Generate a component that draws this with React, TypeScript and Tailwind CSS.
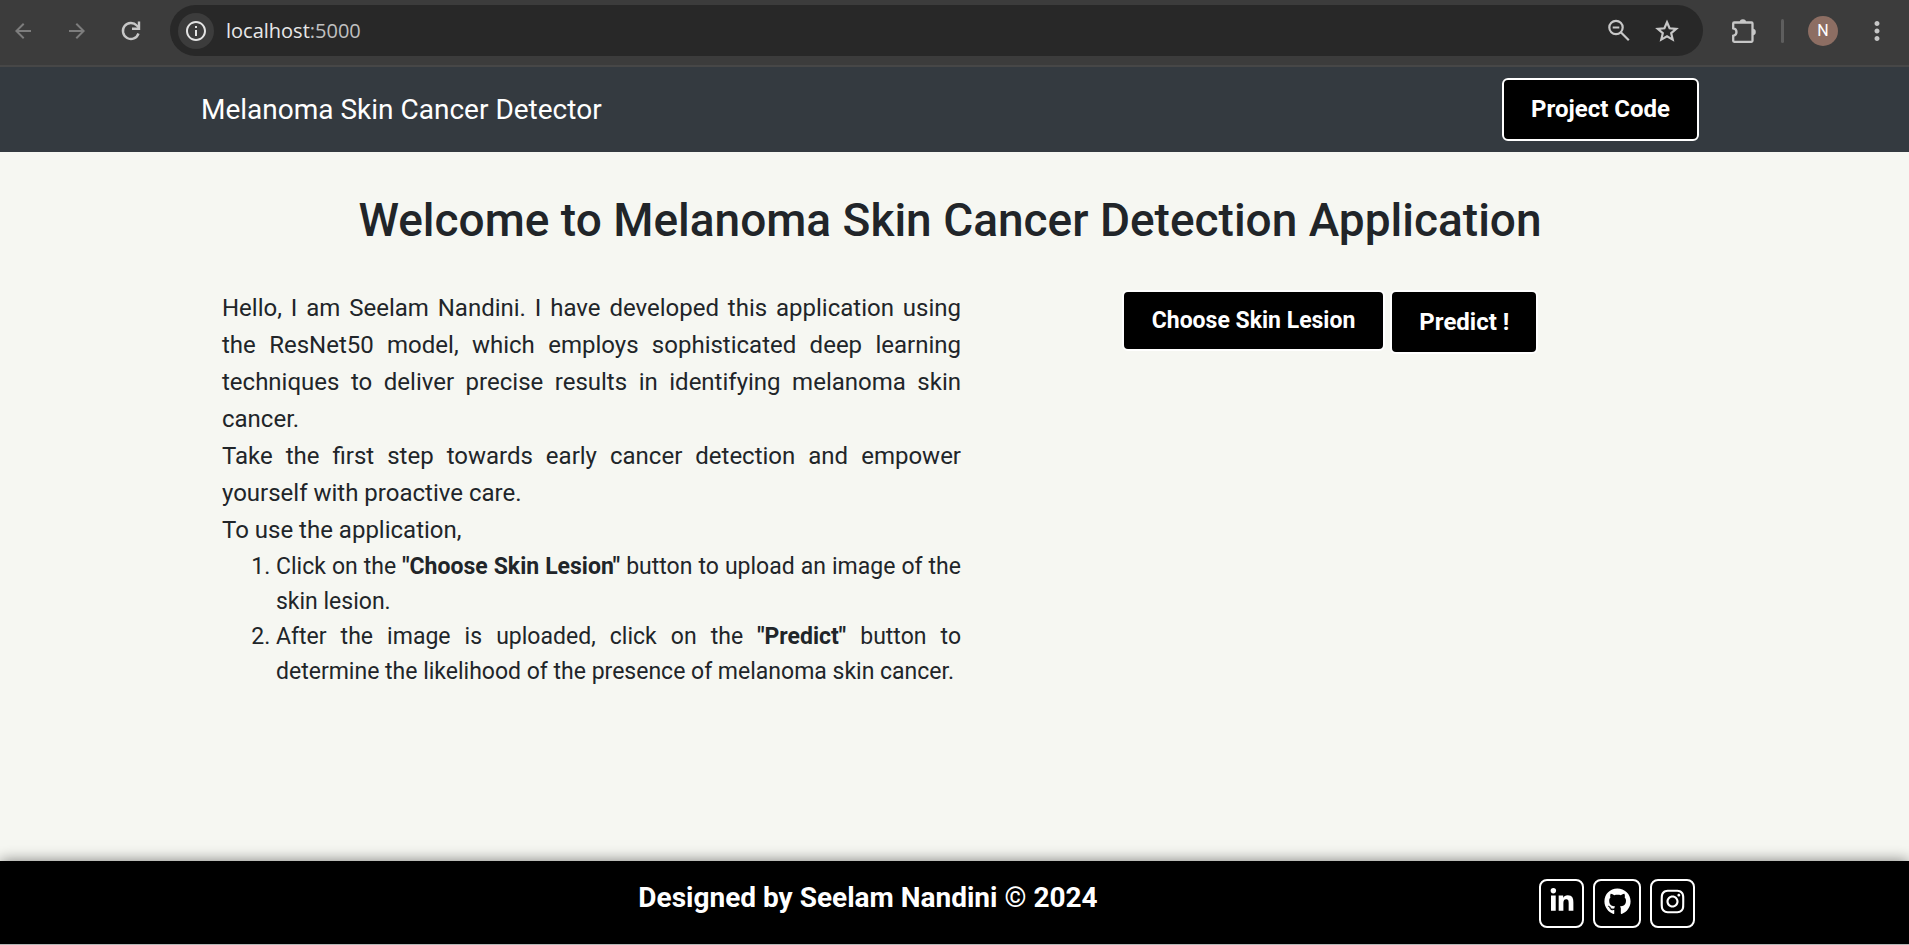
import { FaGithub, FaInstagram, FaLinkedinIn } from "react-icons/fa";
import { MdArrowBack, MdArrowForward, MdInfoOutline, MdMoreVert } from "react-icons/md";

function ReloadIcon() {
  return (
    <svg width="24" height="24" viewBox="0 0 24 24" fill="none" stroke="currentColor" strokeWidth="2.4">
      <path d="M19.5 14.5A8 8 0 1 1 17.8 6.5L20 8.7" />
      <path d="M20 2.6v7.2h-7" />
    </svg>
  );
}

function ZoomOutIcon() {
  return (
    <svg width="26" height="26" viewBox="0 0 26 26" fill="none" stroke="currentColor" strokeWidth="2.2">
      <circle cx="10" cy="9.5" r="6.7" />
      <path d="M6.7 9.5h6.6M14.8 14.3l8 8" />
    </svg>
  );
}

function StarIcon() {
  return (
    <svg width="26" height="26" viewBox="0 0 26 26" fill="none" stroke="currentColor" strokeWidth="2.2">
      <path d="M13 4.2l2.6 6.1 6.6.6-5 4.3 1.5 6.4L13 18.2l-5.7 3.4 1.5-6.4-5-4.3 6.6-.6z" />
    </svg>
  );
}

function PuzzleIcon() {
  return (
    <svg width="28" height="28" viewBox="0 0 28 28">
      <path
        d="M4.2 5.5h17.3a1 1 0 0 1 1 1v17.3a1 1 0 0 1-1 1H4.2a1 1 0 0 1-1-1v-5c2.2-.4 3.3-1.8 3.3-3.7s-1.1-3.3-3.3-3.7V6.5a1 1 0 0 1 1-1z"
        fill="none"
        stroke="currentColor"
        strokeWidth="2.3"
      />
      <path d="M9.7 5.5a3.2 3.2 0 0 1 6.4 0zM22.5 11.8a3.3 3.3 0 0 1 0 6.6z" fill="currentColor" />
    </svg>
  );
}

function BrowserBar() {
  return (
    <div className="flex h-[67px] items-start border-b-2 border-[#474747] bg-[#3c3c3c] pt-[5px] text-[#c7c7c7]">
      <div className="flex h-[51px] w-[170px] shrink-0 items-center gap-[30px] pl-[11px]">
        <button type="button" aria-label="Back" className="text-[#7d7d7d]">
          <MdArrowBack size={24} />
        </button>
        <button type="button" aria-label="Forward" className="text-[#7d7d7d]">
          <MdArrowForward size={24} />
        </button>
        <button type="button" aria-label="Reload">
          <ReloadIcon />
        </button>
      </div>
      <div className="flex h-[51px] flex-1 items-center rounded-full bg-[#282828] pr-[23px] pl-2">
        <button
          type="button"
          aria-label="Site information"
          className="flex size-9 items-center justify-center rounded-full bg-[#3c3c3c] text-[#e3e3e3]"
        >
          <MdInfoOutline size={24} />
        </button>
        <p className="flex-1 pl-3 font-['Open_Sans',sans-serif] text-[20px] text-[#e8e8e8]">
          localhost<span className="text-[#c0c0c0]">:5000</span>
        </p>
        <div className="flex items-center gap-[22px]">
          <button type="button" aria-label="Zoom">
            <ZoomOutIcon />
          </button>
          <button type="button" aria-label="Bookmark">
            <StarIcon />
          </button>
        </div>
      </div>
      <div className="flex h-[51px] w-[206px] shrink-0 items-center pl-[27px]">
        <button type="button" aria-label="Extensions">
          <PuzzleIcon />
        </button>
        <span className="ml-[23px] h-6 w-[3px] rounded bg-[#5e5e5e]" />
        <button
          type="button"
          aria-label="Profile"
          className="ml-6 flex size-[30px] items-center justify-center rounded-full bg-[#8d6e63] font-[Roboto,sans-serif] text-[16px] text-white"
        >
          N
        </button>
        <button type="button" aria-label="Menu" className="ml-6">
          <MdMoreVert size={30} />
        </button>
      </div>
    </div>
  );
}

const buttonStyle =
  "flex items-center justify-center rounded-[6px] border-2 border-white bg-black leading-[33px] font-bold text-white";

const socialStyle =
  "flex h-[49px] items-center justify-center rounded-[8px] border-2 border-white pb-1";

export default function App() {
  return (
    <div className="flex min-h-screen flex-col bg-[#f6f7f2] font-[Roboto,sans-serif] text-[#212529]">
      <BrowserBar />
      <header className="bg-[#343a40] pr-[9px]">
        <nav className="mx-auto flex h-[85px] max-w-[1498px] items-center justify-between">
          <a href="/" className="text-[28px] text-white">
            Melanoma Skin Cancer Detector
          </a>
          <a href="#code" className={`${buttonStyle} h-[63px] px-[27px] text-[24px]`}>
            Project Code
          </a>
        </nav>
      </header>

      <main className="flex-1 pr-[9px]">
        <h1 className="mt-[40px] text-center text-[46px] leading-[56px] font-medium">
          Welcome to Melanoma Skin Cancer Detection Application
        </h1>
        <div className="mx-auto mt-[42px] grid max-w-[1498px] grid-cols-[760fr_738fr]">
          <section className="pl-[21px] text-justify">
            <p className="text-[24px] leading-[37px]">
              Hello, I am Seelam Nandini. I have developed this application using the ResNet50 model,
              which employs sophisticated deep learning techniques to deliver precise results in
              identifying melanoma skin cancer.
              <br />
              Take the first step towards early cancer detection and empower yourself with proactive
              care.
              <br />
              To use the application,
            </p>
            <ol className="list-decimal pl-[54px] text-[23px] leading-[35px]">
              <li>
                Click on the <strong>"Choose Skin Lesion"</strong> button to upload an image of the
                skin lesion.
              </li>
              <li>
                After the image is uploaded, click on the <strong>"Predict"</strong> button to
                determine the likelihood of the presence of melanoma skin cancer.
              </li>
            </ol>
          </section>
          <section className="flex items-start justify-center gap-[5px]">
            <button type="button" className={`${buttonStyle} h-[61px] px-[28px] text-[23px]`}>
              Choose Skin Lesion
            </button>
            <button type="button" className={`${buttonStyle} h-[64px] px-[27px] text-[24px]`}>
              Predict !
            </button>
          </section>
        </div>
      </main>

      <footer className="border-b border-[#b5b5b5] bg-black pr-[9px] text-white shadow-[0_0_14px_rgba(0,0,0,0.5)]">
        <div className="mx-auto flex h-[83px] max-w-[1498px] items-center pt-px">
          <p className="flex-1 pr-1 pb-[10px] text-center text-[28px] leading-[40px] font-bold">
            Designed by Seelam Nandini © 2024
          </p>
          <div className="flex gap-[9px] pr-1">
            <a href="#linkedin" aria-label="LinkedIn" className={`${socialStyle} w-[45px]`}>
              <FaLinkedinIn size={26} />
            </a>
            <a href="#github" aria-label="GitHub" className={`${socialStyle} w-[48px]`}>
              <FaGithub size={27} />
            </a>
            <a href="#instagram" aria-label="Instagram" className={`${socialStyle} w-[45px]`}>
              <FaInstagram size={27} />
            </a>
          </div>
        </div>
      </footer>
    </div>
  );
}
